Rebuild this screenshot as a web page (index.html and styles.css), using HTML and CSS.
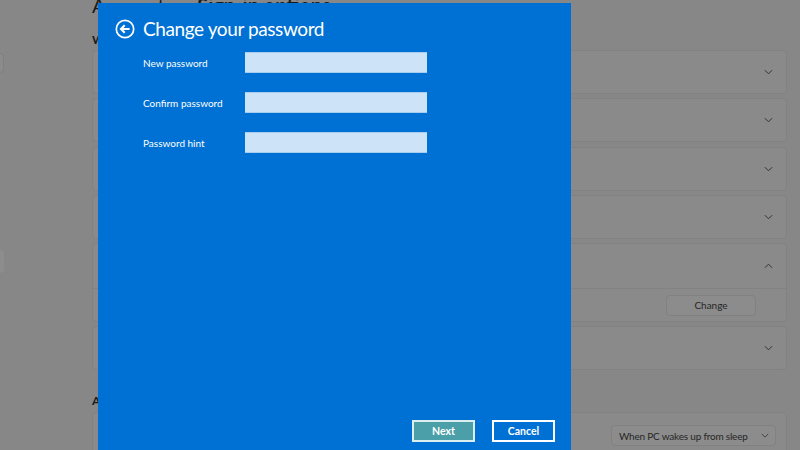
FILE: index.html
```html
<!DOCTYPE html>
<html>
<head>
<meta charset="utf-8">
<link rel="stylesheet" href="styles.css">
</head>
<body>
<div class="settings">
  <aside class="sidebar">
    <div class="search"></div>
    <div class="nav-item"></div>
  </aside>
  <main class="content">
    <h1 class="page-title">Accounts <span class="sep">›</span> <span class="bold">Sign-in options</span></h1>
    <h2 class="section">Ways to sign in</h2>
    <div class="card"><svg class="chev" viewBox="0 0 10 6"><path d="M1 1 L5 5 L9 1" fill="none" stroke="#333" stroke-width="1.1"/></svg></div>
    <div class="card"><svg class="chev" viewBox="0 0 10 6"><path d="M1 1 L5 5 L9 1" fill="none" stroke="#333" stroke-width="1.1"/></svg></div>
    <div class="card"><svg class="chev" viewBox="0 0 10 6"><path d="M1 1 L5 5 L9 1" fill="none" stroke="#333" stroke-width="1.1"/></svg></div>
    <div class="card"><svg class="chev" viewBox="0 0 10 6"><path d="M1 1 L5 5 L9 1" fill="none" stroke="#333" stroke-width="1.1"/></svg></div>
    <div class="card expanded">
      <div class="card-head"><svg class="chev" viewBox="0 0 10 6"><path d="M1 5 L5 1 L9 5" fill="none" stroke="#333" stroke-width="1.1"/></svg></div>
      <div class="card-body"><button class="change">Change</button></div>
    </div>
    <div class="card"><svg class="chev" viewBox="0 0 10 6"><path d="M1 1 L5 5 L9 1" fill="none" stroke="#333" stroke-width="1.1"/></svg></div>
    <h2 class="section section2">Additional settings</h2>
    <div class="card last">
      <div class="dropdown"><span>When PC wakes up from sleep</span><svg class="dd-chev" viewBox="0 0 10 6"><path d="M1 1 L5 5 L9 1" fill="none" stroke="#444" stroke-width="1.2"/></svg></div>
    </div>
  </main>
</div>

<div class="dialog">
  <div class="dialog-head">
    <svg class="back" viewBox="0 0 20 20"><circle cx="10" cy="10" r="8.7" fill="none" stroke="#fff" stroke-width="1.7"/><path d="M14.6 10 H6.2 M9.7 6.3 L6 10 L9.7 13.7" fill="none" stroke="#fff" stroke-width="2.1"/></svg>
    <h1 class="dialog-title">Change your password</h1>
  </div>
  <div class="form">
    <label class="row"><span class="label">New password</span><span class="input"></span></label>
    <label class="row"><span class="label">Confirm password</span><span class="input"></span></label>
    <label class="row"><span class="label">Password hint</span><span class="input"></span></label>
  </div>
  <div class="actions">
    <button class="btn next">Next</button>
    <button class="btn cancel">Cancel</button>
  </div>
</div>
</body>
</html>
```

FILE: styles.css
```css
* { box-sizing: border-box; }
html, body { margin: 0; padding: 0; }
body {
  width: 800px;
  height: 450px;
  overflow: hidden;
  background: #878787;
  font-family: "Lato", "Noto Sans", sans-serif;
  position: relative;
}
.settings {
  display: flex;
  height: 450px;
}
.sidebar {
  width: 92px;
  flex: none;
}
.search {
  margin-top: 53px;
  margin-left: -40px;
  width: 44px;
  height: 20px;
  background: #8b8b8b;
  border: 1px solid #7f7f7f;
  border-radius: 4px;
}
.nav-item {
  margin-top: 177px;
  margin-left: -40px;
  width: 44px;
  height: 23px;
  background: #8d8d8d;
  border-radius: 4px;
}
.content {
  width: 695px;
  flex: none;
}
.page-title {
  margin: -7px 0 0 0;
  font-size: 20px;
  line-height: 24px;
  font-weight: 400;
  color: #1b1b1b;
  white-space: nowrap;
}
.page-title .sep { margin: 0 4px; }
.page-title .bold { font-weight: 700; }
.section {
  margin: 14px 0 2px 0;
  font-size: 12px;
  line-height: 17px;
  font-weight: 700;
  color: #1b1b1b;
}
.section2 { margin: 22px 0 3px 0; }
.card {
  height: 44px;
  margin-bottom: 4.25px;
  background: #8a8a8a;
  border: 1px solid #828282;
  border-radius: 4px;
  display: flex;
  align-items: center;
  justify-content: flex-end;
  padding-right: 13px;
}
.chev { width: 9px; height: 6px; display: block; }
.card.expanded {
  height: 79px;
  display: block;
  padding: 0;
}
.card-head {
  height: 45px;
  border-bottom: 1px solid #828282;
  display: flex;
  align-items: center;
  justify-content: flex-end;
  padding-right: 13px;
}
.card-body {
  display: flex;
  justify-content: flex-end;
  align-items: center;
  height: 32px;
  padding-right: 30px;
}
.change {
  width: 90px;
  height: 21px;
  background: #8c8c8c;
  border: 1px solid #818181;
  border-radius: 4px;
  font-family: inherit;
  font-size: 10px;
  color: #262626;
  padding: 0;
}
.card.last {
  height: 60px;
  align-items: flex-start;
  padding-top: 12px;
  padding-right: 10px;
}
.dropdown {
  width: 165px;
  height: 21px;
  background: #8c8c8c;
  border: 1px solid #818181;
  border-radius: 4px;
  font-size: 10px;
  letter-spacing: -0.2px;
  color: #262626;
  display: flex;
  align-items: center;
  padding-left: 7px;
  gap: 13px;
  white-space: nowrap;
}
.dd-chev { width: 8px; height: 5px; }

/* dialog overlay */
.dialog {
  position: absolute;
  left: 98px;
  top: 3px;
  width: 473px;
  height: 450px;
  background: #0071d4;
  color: #fff;
}
.dialog-head {
  display: flex;
  align-items: center;
  padding: 15px 0 0 17px;
  gap: 8px;
}
.back { width: 20px; height: 20px; }
.dialog-title {
  margin: 0;
  font-size: 19px;
  line-height: 22px;
  font-weight: 400;
  letter-spacing: -0.4px;
}
.form {
  padding: 12px 0 0 45px;
  display: flex;
  flex-direction: column;
  gap: 19px;
}
.row {
  display: flex;
  align-items: center;
}
.label {
  width: 102px;
  font-size: 10px;
}
.input {
  width: 182px;
  height: 21px;
  background: #cde3f7;
  border-top: 1px solid #a9cdee;
  border-bottom: 1px solid #a9cdee;
}
.actions {
  position: absolute;
  left: 314px;
  top: 417px;
  display: flex;
  gap: 17px;
}
.btn {
  width: 63px;
  height: 22px;
  border: 2px solid #fff;
  color: #fff;
  font-family: inherit;
  font-weight: 700;
  font-size: 10.5px;
  padding: 0;
}
.next { background: #4b9fa8; border-color: #dceef0; }
.cancel { background: #0071d4; }
```
